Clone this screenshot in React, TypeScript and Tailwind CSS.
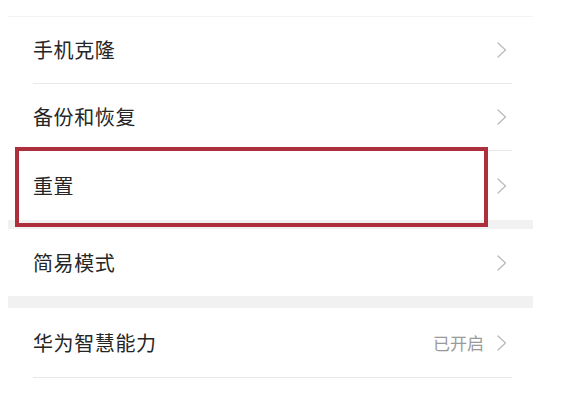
function Chevron() {
  return (
    <svg width="11" height="18" viewBox="0 0 11 18" fill="none" className="shrink-0">
      <polyline points="2,2 9.5,9 2,16" stroke="#b8b8b8" strokeWidth="1.2" strokeLinejoin="round" strokeLinecap="round" />
    </svg>
  );
}

function Row({ label, value, h }: { label: string; value?: string; h: string }) {
  return (
    <div className={`${h} flex items-center pl-[25px] pr-[26px]`}>
      <span className="flex-1 text-[20px] text-[#262626] tracking-[0.6px]">{label}</span>
      {value && <span className="mr-[12px] text-[17px] text-[#9a9a9a]">{value}</span>}
      <Chevron />
    </div>
  );
}

function Divider() {
  return <div className="h-px ml-[25px] mr-[21px] bg-[#e8e8e8]" />;
}

export default function App() {
  return (
    <div className="w-[570px] h-[405px] bg-white overflow-hidden font-['Noto_Sans_CJK_SC','Noto_Sans',sans-serif]">
      <div className="pt-[16px] pl-[8px] w-[533px]">
        <div className="h-px bg-[#f3f3f3]" />
        <Row label="手机克隆" h="h-[66px]" />
        <Divider />
        <Row label="备份和恢复" h="h-[66px]" />
        <Divider />
        <div className="relative">
          <Row label="重置" h="h-[69px]" />
          {/* highlight box */}
          <div className="absolute top-[-4px] left-[7px] w-[473px] h-[80px] border-4 border-[#ad2f3d] z-10" />
        </div>
        <div className="h-[9px] bg-[#f1f1f1]" />
        <Row label="简易模式" h="h-[67px]" />
        <div className="h-[12px] bg-[#f1f1f1]" />
        <Row label="华为智慧能力" value="已开启" h="h-[69px]" />
        <Divider />
      </div>
    </div>
  );
}
